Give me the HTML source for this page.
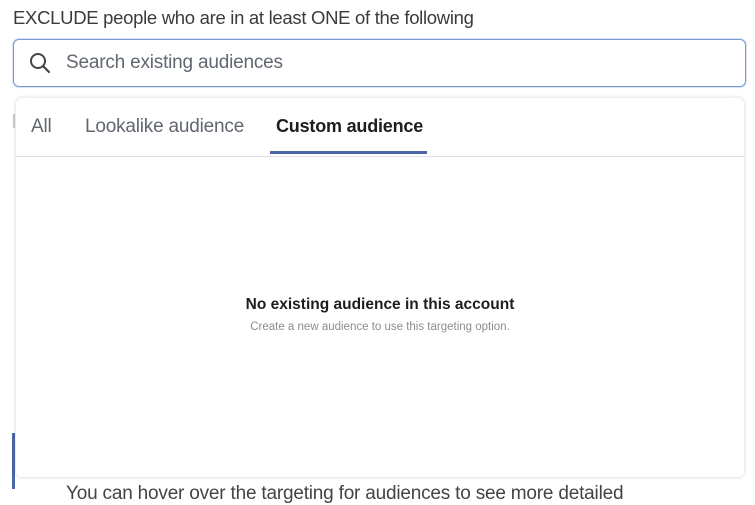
<!DOCTYPE html>
<html><head><style>
body{margin:0;width:755px;height:489px;background:#fff;overflow:hidden;position:relative;font-family:"Liberation Sans",Arial,sans-serif;}
.lbl{position:absolute;left:13px;top:7px;font-size:18.5px;color:#3a3b3c;letter-spacing:-0.3px}
.search{position:absolute;left:13px;top:39px;width:731px;height:46px;border:1.5px solid #7a9ad6;border-radius:6px;background:#fff;box-shadow:0 0 0 1px #dbe4f5}
.search span{position:absolute;left:52px;top:12px;font-size:19px;color:#606770;letter-spacing:-0.2px}
.panel{position:absolute;left:16px;top:98px;width:728px;height:379px;background:#fff;border-radius:6px;box-shadow:0 0 4px rgba(0,0,0,.18)}
.tab{position:absolute;top:18px;font-size:19px;color:#606770;letter-spacing:-0.2px}
.ul{position:absolute;left:254px;top:53px;width:157px;height:3px;background:#4b67a8}
.div{position:absolute;left:0;right:0;top:58px;height:1px;background:#dddfe2}
.t1{position:absolute;left:0;right:0;top:198px;text-align:center;font-size:15.5px;font-weight:bold;color:#1c1e21}
.t2{position:absolute;left:0;right:0;top:223px;text-align:center;font-size:11.5px;color:#8a8d91}
.lb{position:absolute;left:12px;top:433px;width:3px;height:56px;background:#4b67a8}
.lt{position:absolute;left:13px;top:114px;width:2px;height:14px;background:#ccc}
.bot{position:absolute;left:66px;top:483px;font-size:19px;color:#444;letter-spacing:-0.2px}
</style></head><body>
<div class="lbl">EXCLUDE people who are in at least ONE of the following</div>
<div class="search">
<svg style="position:absolute;left:15px;top:12px" width="22" height="22" viewBox="0 0 22 22"><circle cx="9" cy="9" r="7" fill="none" stroke="#444" stroke-width="2"/><path d="M14 14 L20 20" stroke="#444" stroke-width="2.2" stroke-linecap="round"/></svg>
<span>Search existing audiences</span></div>
<div class="lt"></div>
<div class="bot">You can hover over the targeting for audiences to see more detailed</div>
<div class="lb"></div>
<div class="panel">
<div class="tab" style="left:15px">All</div>
<div class="tab" style="left:69px">Lookalike audience</div>
<div class="tab" style="left:260px;color:#1c1e21;font-weight:bold;font-size:18px">Custom audience</div>
<div class="ul"></div>
<div class="div"></div>
<div class="t1">No existing audience in this account</div>
<div class="t2">Create a new audience to use this targeting option.</div>
</div>
</body></html>
